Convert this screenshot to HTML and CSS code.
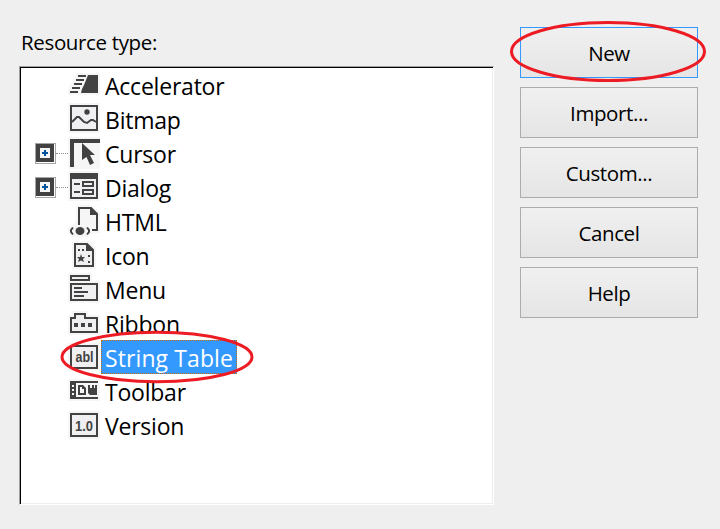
FILE: index.html
```html
<!DOCTYPE html>
<html lang="en">
<head>
<meta charset="utf-8">
<title>Add Resource</title>
<link rel="stylesheet" href="styles.css">
</head>
<body>
<main class="dialog">
  <section class="resources">
    <div class="caption">Resource type:</div>
    <ul class="tree">
      <li class="row"><span class="gutter"></span>
        <svg class="icon" viewBox="0 0 32 34"><path class="halo" d="M8 5H32V27H0V21L6 9Z"/><path class="solid" d="M20 7H30V25H13L14 21L16 17L18 12Z"/><path class="line" d="M10 8H18M8 12H16M6 16H14M4 20H12M2 24H10"/></svg>
        <span class="name">Accelerator</span></li>
      <li class="row"><span class="gutter"></span>
        <svg class="icon" viewBox="0 0 32 34"><path class="halo" d="M0 1h32v30H0z"/><path class="frame" d="M3 4H29V28H3Z"/><circle class="solid" cx="19" cy="10" r="2.7"/><path class="line" d="M4 20L9 15H11L16 20L19 21L23 18H25L28 20"/></svg>
        <span class="name">Bitmap</span></li>
      <li class="row"><span class="gutter"><span class="expander"></span><span class="branch"></span></span>
        <svg class="icon" viewBox="0 0 32 34"><path class="halo" d="M0 1h32v32H0z"/><path class="solid" d="M2 3H32V7H6V31H2ZM14 7L27 19H22L26 27L22 29L18.500 21L14 24Z"/></svg>
        <span class="name">Cursor</span></li>
      <li class="row"><span class="gutter"><span class="expander"></span><span class="branch"></span></span>
        <svg class="icon" viewBox="0 0 32 34"><path class="halo" d="M0 1h32v30H0z"/><path class="frame" d="M3 4H29V28H3ZM15 12H25V16H15ZM15 20H25V24H15Z"/><path class="solid" d="M2 3H30V9H2ZM6 13H12V15H6ZM6 21H12V23H6Z"/></svg>
        <span class="name">Dialog</span></li>
      <li class="row"><span class="gutter"></span>
        <svg class="icon" viewBox="0 0 32 34"><path class="halo" d="M8 1H24L32 9V29H24L20 33H4L0 29V24L8 18Z"/><path class="line" d="M11 21V4H23L29 10V26H24"/><path class="solid" d="M22 3L30 11H22Z"/><ellipse class="solid" cx="12" cy="27" rx="4.500" ry="4"/><path class="line" d="M5 23.500L3 26V28L5 30.500M19 23.500L21 26V28L19 30.500"/></svg>
        <span class="name">HTML</span></li>
      <li class="row"><span class="gutter"></span>
        <svg class="icon" viewBox="0 0 32 34"><path class="halo" d="M4 3H22L28 9V31H4Z"/><path class="frame" d="M7 6H19L25 12V28H7Z"/><path class="solid" d="M18 5L26 13H18ZM10 11H12V13H10ZM14 11H16V13H14ZM20 17H22V19H20ZM20 23H22V25H20ZM13 16L14 19H17L15 21L16 24L13 22.500L10 24L11 21L9 19H12Z"/></svg>
        <span class="name">Icon</span></li>
      <li class="row"><span class="gutter"></span>
        <svg class="icon" viewBox="0 0 32 34"><path class="halo" d="M0 1H24V9H32V31H0Z"/><path class="frame" d="M3 4H21V8H3ZM3 12H29V28H3Z"/><path class="line" d="M6 16H14M6 20H20M6 24H16"/></svg>
        <span class="name">Menu</span></li>
      <li class="row"><span class="gutter"></span>
        <svg class="icon" viewBox="0 0 32 34"><path class="halo" d="M0 9H4V5H20V9H32V29H0Z"/><path class="frame" d="M3 12H7V8H17V12H29V26H3Z"/><path class="solid" d="M6 17H10V21H6ZM13 17H17V21H13ZM20 17H24V21H20Z"/></svg>
        <span class="name">Ribbon</span></li>
      <li class="row"><span class="gutter"></span>
        <svg class="icon" viewBox="0 0 32 34"><path class="halo" d="M0 3h32v28H0z"/><path class="frame" d="M3 6H29V28H3Z"/><text class="glyph" x="7.500" y="22" textLength="18" lengthAdjust="spacingAndGlyphs">abl</text></svg>
        <span class="name selected">String Table</span></li>
      <li class="row"><span class="gutter"></span>
        <svg class="icon" viewBox="0 0 32 34"><path class="halo" d="M0 5h32v22H0z"/><path class="solid" fill-rule="evenodd" d="M2 7H30V9H8V23H30V25H2ZM4 11V13H6V11ZM4 15V17H6V15ZM4 19V21H6V19ZM10 11H15L18 14V21H10ZM12 13V19H16V15H14V13ZM20 11H22V14H24V11H26V14H27V11H29V21H22L20 19Z"/></svg>
        <span class="name">Toolbar</span></li>
      <li class="row"><span class="gutter"></span>
        <svg class="icon" viewBox="0 0 32 34"><path class="halo" d="M0 3h32v28H0z"/><path class="frame" d="M3 6H29V28H3Z"/><text class="glyph tall" x="7" y="22.500" textLength="18" lengthAdjust="spacingAndGlyphs">1.0</text></svg>
        <span class="name">Version</span></li>
    </ul>
  </section>
  <div class="actions">
    <button class="button default">New</button>
    <button class="button">Import...</button>
    <button class="button">Custom...</button>
    <button class="button">Cancel</button>
    <button class="button">Help</button>
  </div>
</main>
<svg class="marks" viewBox="0 0 720 529"><ellipse cx="608" cy="51.500" rx="96.500" ry="29"/><ellipse cx="157" cy="357" rx="95" ry="24.800"/></svg>
</body>
</html>
```
FILE: styles.css
```css
* { box-sizing: border-box; }
body { margin: 0; background: #efefef; color: #000; font-family: "Open Sans", "Noto Sans", sans-serif; }
.dialog { display: flex; gap: 26px; width: 720px; height: 529px; padding: 27px 22px 24px 19px; overflow: hidden; }
.resources { width: 475px; }
.caption { height: 39px; padding-left: 2px; font-size: 20.5px; letter-spacing: -0.35px; line-height: 31px; white-space: nowrap; }
.tree { height: 439px; margin: 0; list-style: none; background: #fff;
  border: 1px solid #a0a0a0; border-right-color: #fff; border-bottom-color: #fff;
  box-shadow: inset 1px 1px #000, inset -1px -1px #eee; padding: 1px; }
.row { display: flex; height: 34px; }
.gutter { display: flex; align-items: flex-start; width: 47px; padding: 7px 0 0 14px; }
.expander { flex: none; width: 21px; height: 21px; border: 1px solid #a5a5a5;
  background:
    linear-gradient(#00539c, #00539c) 6px 8px / 6px 2px no-repeat,
    linear-gradient(#00539c, #00539c) 8px 6px / 2px 6px no-repeat,
    linear-gradient(#f6f6f6, #f6f6f6) 4px 4px / 10px 10px no-repeat,
    linear-gradient(#424242, #424242) 0 0 / 18px 18px no-repeat, #fff; }
.branch { flex: 1; margin-top: 10px; border-top: 1px dotted #909090; }
.icon { flex: none; width: 32px; height: 34px; margin-right: 1px; overflow: visible; }
.halo { fill: #f6f6f6; }
.solid { fill: #424242; }
.frame { fill: #f0eff1; stroke: #424242; stroke-width: 2; }
.line { fill: none; stroke: #424242; stroke-width: 2; }
.glyph { fill: #424242; font: bold 14px "Liberation Sans", sans-serif; }
.glyph.tall { font-size: 15px; }
.name { height: 34px; padding: 0 4px; font-size: 23px; letter-spacing: -0.22px; line-height: 37px; white-space: nowrap; }
.selected { width: 136px; color: #fff; background: #3399ff; border: 1px dotted #cc6600; padding: 0 3px; line-height: 35px; letter-spacing: 0.1px; }
.actions { display: flex; flex-direction: column; gap: 9px; width: 178px; }
.button { height: 51px; padding: 0; border: 1px solid #acacac; border-radius: 0;
  background: linear-gradient(#f0f0f0, #e5e5e5); font: 20.5px "Open Sans", "Noto Sans", sans-serif; letter-spacing: -0.4px; color: #000; }
.button.default { border-color: #3399ff; }
.marks { position: absolute; top: 0; left: 0; width: 720px; height: 529px; pointer-events: none; }
.marks ellipse { fill: none; stroke: #ed1c24; stroke-width: 3; }
```
